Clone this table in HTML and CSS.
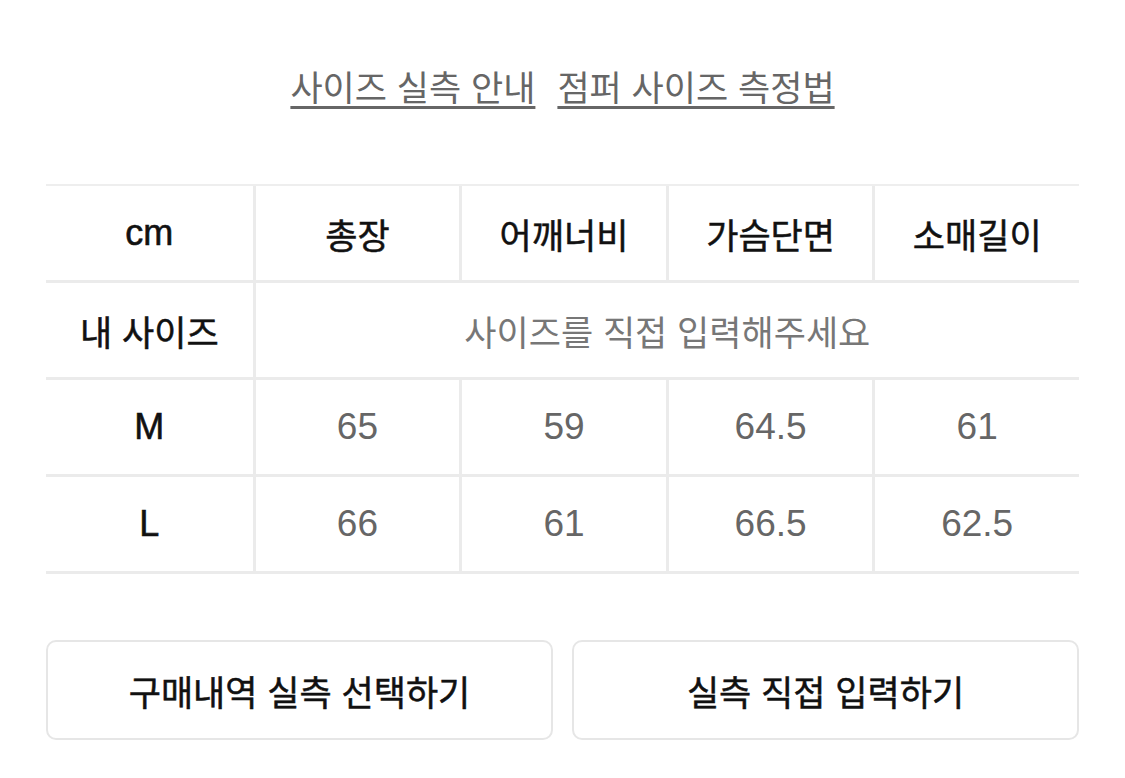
FILE: index.html
```html
<!DOCTYPE html>
<html lang="ko">
<head>
<meta charset="utf-8">
<title>사이즈 실측</title>
<link rel="stylesheet" href="styles.css">
</head>
<body>
<main class="page">
  <nav class="links">
    <a class="link" href="#">사이즈 실측 안내</a>
    <a class="link" href="#">점퍼 사이즈 측정법</a>
  </nav>

  <section class="size-table">
    <div class="cell head latin first">cm</div>
    <div class="cell head">총장</div>
    <div class="cell head">어깨너비</div>
    <div class="cell head">가슴단면</div>
    <div class="cell head">소매길이</div>

    <div class="cell head first">내 사이즈</div>
    <div class="cell placeholder span4">사이즈를 직접 입력해주세요</div>

    <div class="cell head latin first">M</div>
    <div class="cell num">65</div>
    <div class="cell num">59</div>
    <div class="cell num">64.5</div>
    <div class="cell num">61</div>

    <div class="cell head latin first">L</div>
    <div class="cell num">66</div>
    <div class="cell num">61</div>
    <div class="cell num">66.5</div>
    <div class="cell num">62.5</div>
  </section>

  <div class="actions">
    <button class="btn" type="button">구매내역 실측 선택하기</button>
    <button class="btn" type="button">실측 직접 입력하기</button>
  </div>
</main>
</body>
</html>
```

FILE: styles.css
```css
html, body {
  margin: 0;
  padding: 0;
  background: #ffffff;
}

body {
  font-family: "Noto Sans CJK KR", "Liberation Sans", sans-serif;
  color: #111111;
}

.page {
  width: 1125px;
  box-sizing: border-box;
  padding: 66px 46px 0 46px;
}

.links {
  display: flex;
  justify-content: center;
  gap: 22px;
  height: 40px;
  line-height: 40px;
}

.link {
  font-size: 35px;
  color: #666666;
  text-decoration: underline;
  text-decoration-thickness: 3px;
  text-underline-offset: 5px;
  text-decoration-color: #666666;
}

.size-table {
  margin-top: 78px;
  display: grid;
  grid-template-columns: repeat(5, 1fr);
  border-top: 2px solid #eeeeee;
}

.cell {
  height: 94px;
  display: flex;
  align-items: center;
  justify-content: center;
  border-bottom: 3px solid #ebebeb;
  border-left: 3px solid #ebebeb;
  font-size: 35px;
}

.cell.first {
  border-left: none;
}

.head {
  color: #111111;
  font-weight: 400;
  -webkit-text-stroke: 0.5px #111111;
}

.latin {
  font-family: "Liberation Sans", sans-serif;
  font-size: 36px;
  -webkit-text-stroke: 0.6px #111111;
}

.num {
  font-family: "Liberation Sans", sans-serif;
  font-size: 37px;
  color: #666666;
}

.placeholder {
  color: #777777;
  font-weight: 400;
}

.span4 {
  grid-column: span 4;
}

.actions {
  margin-top: 66px;
  display: flex;
  gap: 19px;
}

.btn {
  flex: 1;
  height: 100px;
  background: #ffffff;
  border: 2px solid #e6e6e6;
  border-radius: 10px;
  font-family: "Noto Sans CJK KR", "Liberation Sans", sans-serif;
  font-size: 35px;
  font-weight: 400;
  -webkit-text-stroke: 0.5px #111111;
  color: #111111;
  padding: 0;
}
```
